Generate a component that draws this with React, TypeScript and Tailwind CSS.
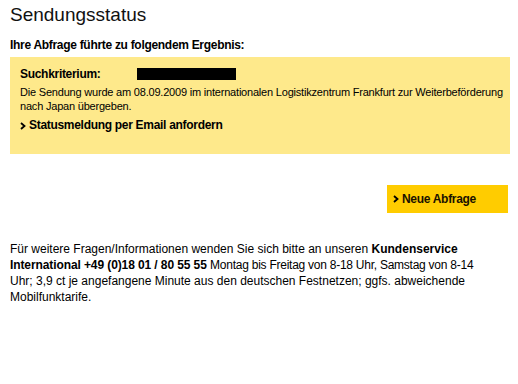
const Chevron = () => (
  <svg width="6" height="8" viewBox="0 0 6 8" className="mr-[3px] shrink-0">
    <path d="M1 1 L4.5 4 L1 7" fill="none" stroke="#000" strokeWidth="1.8" />
  </svg>
);

export default function App() {
  return (
    <div className="w-[518px] h-[384px] bg-white pl-[10px] text-black font-['Liberation_Sans',Arial,sans-serif]">
      {/* Header */}
      <h1 className="pt-[3px] text-[19px] leading-[24px] text-[#111]">Sendungsstatus</h1>
      <p className="mt-[11px] text-[12px] leading-[15px] font-bold tracking-[-0.3px]">
        Ihre Abfrage führte zu folgendem Ergebnis:
      </p>

      {/* Result box */}
      <div className="mt-[4px] w-[500px] h-[97px] bg-[#fee98b] pl-[10px] pt-[10px]">
        <div className="flex items-start h-[15px]">
          <span className="w-[117px] text-[12px] leading-[15px] font-bold tracking-[-0.3px]">Suchkriterium:</span>
          <span className="mt-[1px] w-[99px] h-[12px] bg-black" />
        </div>
        <p className="mt-[3px] text-[11px] leading-[14px] tracking-[-0.2px] whitespace-nowrap">
          Die Sendung wurde am 08.09.2009 im internationalen Logistikzentrum Frankfurt zur Weiterbeförderung
          <br />
          nach Japan übergeben.
        </p>
        <a className="mt-[5px] flex items-center text-[12px] leading-[15px] font-bold tracking-[-0.3px] cursor-pointer">
          <Chevron />
          Statusmeldung per Email anfordern
        </a>
      </div>

      {/* Action */}
      <div className="mt-[31px] w-[498px] flex justify-end">
        <button className="w-[121px] h-[28px] bg-[#ffcc00] flex items-center pl-[6px] text-[12px] font-bold tracking-[-0.3px] text-[#1a1200]">
          <Chevron />
          Neue Abfrage
        </button>
      </div>

      {/* Footer */}
      <p className="mt-[28px] w-[500px] text-[12px] leading-[16px] whitespace-nowrap">
        Für weitere Fragen/Informationen wenden Sie sich bitte an unseren <b>Kundenservice</b>
        <br />
        <b className="tracking-[-0.1px]">International +49 (0)18 01 / 80 55 55</b>{" "}
        <span className="tracking-[-0.25px]">Montag bis Freitag von 8-18 Uhr, Samstag von 8-14</span>
        <br />
        Uhr; 3,9 ct je angefangene Minute aus den deutschen Festnetzen; ggfs. abweichende
        <br />
        Mobilfunktarife.
      </p>
    </div>
  );
}
